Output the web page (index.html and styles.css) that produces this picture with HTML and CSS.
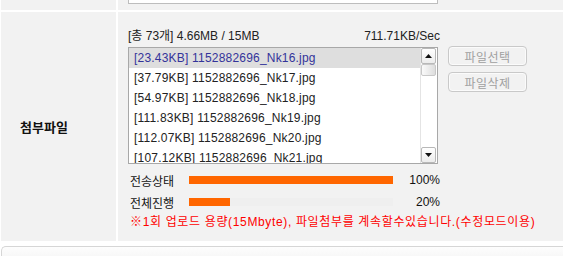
FILE: index.html
```html
<!DOCTYPE html>
<html>
<head>
    <title>첨부파일</title>
    <link rel="stylesheet" href="styles.css">
</head>
<body>
    <div class="board">
        <div class="cell-head"></div>
        <div class="cell-body">
            <div class="prev-box"></div>
        </div>

        <div class="cell-head label">첨부파일</div>
        <div class="cell-body upload">
            <div class="upload-info">
                <span>[총 73개] 4.66MB / 15MB</span>
                <span>711.71KB/Sec</span>
            </div>
            <div class="upload-main">
                <div class="file-list">
                    <ul class="file-items">
                        <li class="selected">[23.43KB] 1152882696_Nk16.jpg</li>
                        <li>[37.79KB] 1152882696_Nk17.jpg</li>
                        <li>[54.97KB] 1152882696_Nk18.jpg</li>
                        <li>[111.83KB] 1152882696_Nk19.jpg</li>
                        <li>[112.07KB] 1152882696_Nk20.jpg</li>
                        <li>[107.12KB] 1152882696_Nk21.jpg</li>
                    </ul>
                    <div class="scrollbar">
                        <div class="scroll-btn">
                            <svg width="7" height="4" viewBox="0 0 7 4"><path d="M3.5 0 L7 4 L0 4 Z" fill="#111"/></svg>
                        </div>
                        <div class="scroll-thumb"></div>
                        <div class="scroll-track"></div>
                        <div class="scroll-btn">
                            <svg width="7" height="4" viewBox="0 0 7 4"><path d="M0 0 L7 0 L3.5 4 Z" fill="#111"/></svg>
                        </div>
                    </div>
                </div>
                <div class="file-buttons">
                    <button type="button" disabled>파일선택</button>
                    <button type="button" disabled>파일삭제</button>
                </div>
            </div>
            <div class="progress-row">
                <span class="progress-label">전송상태</span>
                <div class="progress-bar"><div class="progress-fill" style="width: 100%"></div></div>
                <span class="progress-value">100%</span>
            </div>
            <div class="progress-row">
                <span class="progress-label">전체진행</span>
                <div class="progress-bar"><div class="progress-fill" style="width: 20%"></div></div>
                <span class="progress-value">20%</span>
            </div>
            <p class="notice">※1회 업로드 용량(15Mbyte), 파일첨부를 계속할수있습니다.(수정모드이용)</p>
        </div>
    </div>
    <div class="next-box"></div>
</body>
</html>
```

FILE: styles.css
```css
body {
    margin: 0;
    background-color: #fff;
    font-family: "Liberation Sans", "Noto Sans CJK KR", sans-serif;
    font-size: 12px;
    color: #222;
    overflow: hidden;
}

.board {
    display: grid;
    grid-template-columns: 115px 1fr;
    grid-template-rows: 10px 229px;
    gap: 2px;
    padding-left: 1px;
    background-color: #fff;
}

.cell-head,
.cell-body {
    background-color: #f2f2f2;
}

.cell-head.label {
    display: flex;
    align-items: center;
    padding-left: 19px;
    font-family: "Noto Sans CJK KR", sans-serif;
    font-size: 13px;
    font-weight: bold;
    color: #111;
}

.cell-body {
    padding-left: 10px;
}

.prev-box {
    width: 310px;
    height: 4px;
    box-sizing: border-box;
    border: 1px solid #bdbdbd;
    border-top: none;
    background-color: #fff;
}

.upload {
    padding-top: 17px;
}

.upload-info {
    width: 312px;
    display: flex;
    justify-content: space-between;
    line-height: 14px;
    margin-bottom: 4px;
}

.upload-main {
    display: flex;
    align-items: flex-start;
}

.file-list {
    width: 310px;
    height: 117px;
    box-sizing: border-box;
    border: 1px solid #a8a8a8;
    background-color: #fff;
    display: flex;
}

.file-items {
    flex: 1;
    margin: 0;
    padding: 0;
    list-style: none;
    overflow: hidden;
}

.file-items li {
    height: 20px;
    line-height: 20px;
    padding-left: 5px;
    white-space: nowrap;
    letter-spacing: 0.2px;
    color: #222;
}

.file-items li.selected {
    background-color: #dedede;
    color: #33339a;
}

.scrollbar {
    width: 16px;
    margin-right: 1px;
    display: flex;
    flex-direction: column;
    border-left: 1px solid #e4e4e4;
    box-sizing: border-box;
}

.scroll-btn {
    height: 16px;
    box-sizing: border-box;
    border: 1px solid #b8b8b8;
    border-radius: 2px;
    background: linear-gradient(#ffffff, #ececec);
    display: flex;
    align-items: center;
    justify-content: center;
}

.scroll-thumb {
    height: 12px;
    box-sizing: border-box;
    border: 1px solid #c8c8c8;
    border-radius: 2px;
    background: linear-gradient(to right, #fafafa, #dddddd);
}

.scroll-track {
    flex: 1;
}

.file-buttons {
    display: flex;
    flex-direction: column;
    gap: 6px;
    margin-left: 10px;
    margin-top: -1px;
}

.file-buttons button {
    width: 79px;
    height: 20px;
    padding: 0;
    border: 1px solid #c9c9c9;
    border-radius: 4px;
    box-shadow: inset 0 0 0 1px #fbfbfb;
    background-color: #f2f2f2;
    font-family: "Noto Sans CJK KR", sans-serif;
    font-size: 12px;
    letter-spacing: 0.5px;
    color: #a0a0a0;
}

.progress-row {
    display: flex;
    align-items: center;
    height: 22px;
    padding-left: 2px;
}

.upload-main + .progress-row {
    margin-top: 5px;
}

.progress-label {
    width: 59px;
    color: #111;
}

.progress-bar {
    width: 204px;
    height: 8px;
    background-color: #efefef;
}

.progress-fill {
    height: 100%;
    background-color: #ff6600;
}

.progress-value {
    width: 47px;
    text-align: right;
    color: #111;
}

.notice {
    margin: 0;
    padding-left: 2px;
    line-height: 18px;
    letter-spacing: 0.65px;
    color: #ff0000;
}

.next-box {
    height: 30px;
    margin-top: 5px;
    margin-left: 1px;
    border: 1px solid #d6d6d6;
    border-right: none;
    border-top-left-radius: 5px;
    background: linear-gradient(#fdfdfd, #ececec);
}
```
